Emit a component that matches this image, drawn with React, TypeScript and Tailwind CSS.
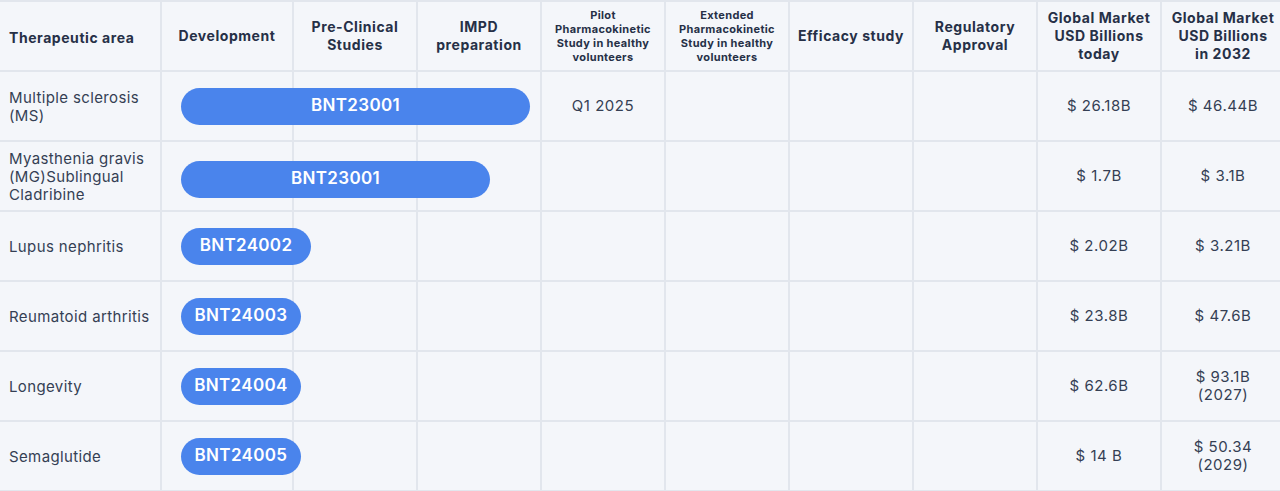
import React from "react";

type Row = {
  area: string[];
  code: string;
  w: string;
  shift?: string;
  q?: string;
  today: string[];
  future: string[];
};

const rows: Row[] = [
  { area: ["Multiple sclerosis", "(MS)"], code: "BNT23001", w: "w-[349px]", q: "Q1 2025", today: ["$ 26.18B"], future: ["$ 46.44B"] },
  { area: ["Myasthenia gravis", "(MG)Sublingual", "Cladribine"], code: "BNT23001", w: "w-[309px]", shift: "mt-[6px]", today: ["$ 1.7B"], future: ["$ 3.1B"] },
  { area: ["Lupus nephritis"], code: "BNT24002", w: "w-[130px]", today: ["$ 2.02B"], future: ["$ 3.21B"] },
  { area: ["Reumatoid arthritis"], code: "BNT24003", w: "w-[120px]", today: ["$ 23.8B"], future: ["$ 47.6B"] },
  { area: ["Longevity"], code: "BNT24004", w: "w-[120px]", today: ["$ 62.6B"], future: ["$ 93.1B", "(2027)"] },
  { area: ["Semaglutide"], code: "BNT24005", w: "w-[120px]", today: ["$ 14 B"], future: ["$ 50.34", "(2029)"] },
];

const colStart = [
  "col-start-1",
  "col-start-2",
  "col-start-3",
  "col-start-4",
  "col-start-5",
  "col-start-6",
  "col-start-7",
  "col-start-8",
  "col-start-9",
  "col-start-10",
];

const gridRow =
  "grid grid-cols-[160px_130px_repeat(8,122px)] grid-rows-[68px] gap-x-[2px] h-[68px]";

function Lines({ lines }: { lines: string[] }) {
  return (
    <>
      {lines.map((l, i) => (
        <React.Fragment key={i}>
          {i > 0 && <br />}
          {l}
        </React.Fragment>
      ))}
    </>
  );
}

const headers: { lines: string[]; small?: boolean }[] = [
  { lines: ["Development"] },
  { lines: ["Pre-Clinical", "Studies"] },
  { lines: ["IMPD", "preparation"] },
  { lines: ["Pilot", "Pharmacokinetic", "Study in healthy", "volunteers"], small: true },
  { lines: ["Extended", "Pharmacokinetic", "Study in healthy", "volunteers"], small: true },
  { lines: ["Efficacy study"] },
  { lines: ["Regulatory", "Approval"] },
  { lines: ["Global Market", "USD Billions", "today"] },
  { lines: ["Global Market", "USD Billions", "in 2032"] },
];

export default function App() {
  return (
    <div className="w-[1280px] h-[491px] overflow-hidden bg-[#f4f6fa] font-['Inter','Noto_Sans',sans-serif]">
      <div className="w-[1284px] flex flex-col gap-y-[2px] bg-[#e2e6ed] pt-[2px] pb-[2px]">
        {/* Header */}
        <div className={gridRow}>
          <div className="col-start-1 row-start-1 bg-[#f4f6fa] flex items-center pl-[9px] pt-[2px] text-[14px] font-bold text-[#263047] tracking-[0.04em]">
            Therapeutic area
          </div>
          {headers.map((h, i) => (
            <div
              key={i}
              className={`${colStart[i + 1]} row-start-1 bg-[#f4f6fa] flex items-center justify-center text-center font-bold text-[#263047] ${
                h.small ? "text-[11px] leading-[14px] tracking-[0.03em]" : "text-[14px] leading-[18px] tracking-[0.04em]"
              }`}
            >
              <div>
                <Lines lines={h.lines} />
              </div>
            </div>
          ))}
        </div>

        {rows.map((r, ri) => {
          const cells: React.ReactNode[] = [];
          for (let c = 1; c < 10; c++) {
            let content: React.ReactNode = null;
            if (c === 4 && r.q) content = r.q;
            if (c === 8) content = <Lines lines={r.today} />;
            if (c === 9) content = <Lines lines={r.future} />;
            cells.push(
              <div
                key={c}
                className={`${colStart[c]} row-start-1 bg-[#f4f6fa] flex items-center justify-center text-center text-[15px] leading-[18px] text-[#353f54] tracking-[0.035em]`}
              >
                {content && <div>{content}</div>}
              </div>
            );
          }
          return (
            <div key={ri} className={gridRow}>
              <div className="col-start-1 row-start-1 bg-[#f4f6fa] flex items-center pl-[9px] pr-[2px] pt-[1px] text-[15px] leading-[18px] text-[#353f54] tracking-[0.025em]">
                <div>
                  <Lines lines={r.area} />
                </div>
              </div>
              {cells}
              <div
                className={`col-start-2 col-span-9 row-start-1 self-center justify-self-start ml-[19px] ${r.w} ${r.shift ?? ""} h-[37px] rounded-full bg-[#4a84ec] text-white text-[17px] font-semibold tracking-[0.02em] flex items-center justify-center z-10`}
              >
                {r.code}
              </div>
            </div>
          );
        })}
      </div>
    </div>
  );
}
